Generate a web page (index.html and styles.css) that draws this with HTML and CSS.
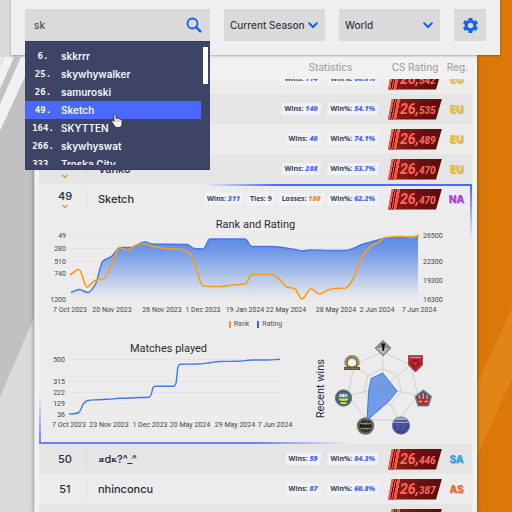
FILE: index.html
```html
<!DOCTYPE html>
<html lang="en">
<head>
<meta charset="utf-8">
<title>Leaderboard</title>
<link rel="stylesheet" href="styles.css">
</head>
<body>
<svg class="backdrop" viewBox="0 0 512 512" preserveAspectRatio="none" aria-hidden="true">
  <rect width="256" height="512" fill="#c1c1c1"/>
  <rect x="256" width="256" height="512" fill="#dc780a"/>
  <path d="M0 0H40V57H0Z" fill="#d9d9d9"/>
  <path d="M0 57H3L0 65Z" fill="#f0f0f0"/>
  <path d="M4 57H14L0 89V66Z M21 57H34L0 131V104Z" fill="#f1f1f1"/>
  <path d="M0 397L40 304V512H0Z" fill="#dadada"/>
  <path d="M512 308V378L470 472V400Z" fill="#e28518"/>
</svg>

<header class="toolbar">
  <div class="search">
    <label class="hidden" for="q">Search player</label>
    <input id="q" class="search-input" type="text" value="sk" autocomplete="off">
    <button class="search-button" type="button" aria-label="Search">
      <svg viewBox="0 0 16 16" width="16" height="16"><circle cx="6.5" cy="6.5" r="5" fill="none" stroke="#1763ea" stroke-width="1.8"/><path d="M10.2 10.2L14.3 14.3" stroke="#1763ea" stroke-width="2.5" stroke-linecap="round"/></svg>
    </button>
    <div class="results">
      <ul class="results-list">
        <li><span class="place">6.</span>skkrrr</li>
        <li><span class="place">25.</span>skywhywalker</li>
        <li><span class="place">26.</span>samuroski</li>
        <li class="active"><span class="place">49.</span>Sketch</li>
        <li><span class="place">164.</span>SKYTTEN</li>
        <li><span class="place">266.</span>skywhyswat</li>
        <li><span class="place">333.</span>Troska City</li>
      </ul>
      <span class="thumb"></span>
      <svg class="pointer" viewBox="0 0 12 16" width="12" height="16" aria-hidden="true"><path d="M3 8.5V1.8C3 .4 5 .4 5 1.8V5.4C5.6 4.8 6.8 5 7 5.9C7.7 5.3 8.8 5.600 9 6.500C9.900 6 11 6.500 11 7.600V10.500C11 13.500 9.500 14.500 7 14.500C4.500 14.500 3.700 13.500 2.700 11.800L.8 8.800C.3 7.700 1.500 7 2.200 7.700Z" fill="#fff" stroke="#222" stroke-width=".8"/><path d="M5 6V9M7 6.500V9M9 7V9" stroke="#555" stroke-width=".5"/></svg>
    </div>
  </div>
  <div class="picker">
    <label class="hidden" for="season">Season</label>
    <select id="season"><option>Current Season</option></select>
    <svg class="chevron" viewBox="0 0 10 7" width="10" height="7"><path d="M1.200 1.200L5 5L8.800 1.200"/></svg>
  </div>
  <div class="picker">
    <label class="hidden" for="region">Region</label>
    <select id="region"><option>World</option></select>
    <svg class="chevron" viewBox="0 0 10 7" width="10" height="7"><path d="M1.200 1.200L5 5L8.800 1.200"/></svg>
  </div>
  <button class="settings" type="button" aria-label="Settings">
    <svg viewBox="0 0 24 24" width="19" height="19"><path fill="#1763ea" d="M19.140 12.940c.040-.300.060-.610.060-.940 0-.320-.020-.640-.070-.940l2.030-1.580c.180-.140.230-.410.120-.610l-1.920-3.320c-.120-.220-.370-.290-.590-.220l-2.390.960c-.500-.380-1.030-.700-1.620-.940l-.360-2.540c-.040-.240-.240-.410-.480-.410h-3.840c-.240 0-.430.170-.470.410l-.360 2.540c-.590.240-1.130.570-1.620.940l-2.390-.960c-.220-.080-.470 0-.590.220L2.740 8.870c-.120.210-.080.470.120.610l2.030 1.580c-.050.300-.090.630-.090.940s.020.640.070.940l-2.030 1.580c-.180.140-.230.410-.120.610l1.920 3.320c.120.220.370.290.590.220l2.390-.960c.500.380 1.030.700 1.620.940l.360 2.540c.050.240.240.410.480.410h3.840c.240 0 .440-.170.470-.410l.360-2.540c.590-.240 1.130-.560 1.620-.940l2.390.960c.220.080.470 0 .590-.220l1.920-3.320c.120-.220.070-.470-.120-.610l-2.010-1.580zM12 15.600c-1.980 0-3.600-1.620-3.600-3.600s1.620-3.600 3.600-3.600 3.600 1.620 3.600 3.600-1.620 3.600-3.600 3.600z"/></svg>
  </button>
</header>

<main class="board">
<table>
  <thead>
    <tr><th class="rank"></th><th class="name"></th><th class="stats">Statistics</th><th class="rating">CS Rating</th><th class="zone">Reg.</th></tr>
  </thead>
  <tbody>
    <tr class="row cut">
      <td class="rank"></td><td class="name"></td>
      <td class="stats"><span class="pill">Wins: <b>114</b></span><span class="pill">Win%: <b>60.0%</b></span></td>
      <td class="rating"><span class="badge">26,<small>542</small></span></td><td class="zone eu">EU</td>
    </tr>
    <tr class="row odd">
      <td class="rank"></td><td class="name"></td>
      <td class="stats"><span class="pill">Wins: <b>140</b></span><span class="pill">Win%: <b>54.1%</b></span></td>
      <td class="rating"><span class="badge">26,<small>535</small></span></td><td class="zone eu">EU</td>
    </tr>
    <tr class="row">
      <td class="rank"></td><td class="name"></td>
      <td class="stats"><span class="pill">Wins: <b>40</b></span><span class="pill">Win%: <b>74.1%</b></span></td>
      <td class="rating"><span class="badge">26,<small>489</small></span></td><td class="zone eu">EU</td>
    </tr>
    <tr class="row odd">
      <td class="rank moved">48<svg viewBox="0 0 8 5" width="8" height="5"><path d="M1.500 1L4 3.500L6.500 1"/></svg></td><td class="name">Vanko</td>
      <td class="stats"><span class="pill">Wins: <b>288</b></span><span class="pill">Win%: <b>53.7%</b></span></td>
      <td class="rating"><span class="badge">26,<small>470</small></span></td><td class="zone eu">EU</td>
    </tr>
  </tbody>
  <tbody class="open">
    <tr class="row">
      <td class="rank moved">49<svg viewBox="0 0 8 5" width="8" height="5"><path d="M1.500 1L4 3.500L6.500 1"/></svg></td><td class="name">Sketch</td>
      <td class="stats tight"><span class="pill">Wins: <b>311</b></span><span class="pill">Ties: 9</span><span class="pill">Losses: <b class="loss">180</b></span><span class="pill">Win%: <b>62.2%</b></span></td>
      <td class="rating"><span class="badge">26,<small>470</small></span></td><td class="zone na">NA</td>
    </tr>
    <tr class="detail">
      <td colspan="5">
        <h3>Rank and Rating</h3>
        <svg class="chart" viewBox="39 234 433 82">
          <defs><linearGradient id="fade" x1="0" y1="0" x2="0" y2="1"><stop offset="0" stop-color="#5b8ae6"/><stop offset=".2" stop-color="#6c96e8"/><stop offset="1" stop-color="#6c96e8" stop-opacity="0"/></linearGradient></defs>
          <path class="grid" d="M70 235.500H419M70 248.500H419M70 261.500H419M70 273.500H419M70 299.500H419"/>
          <path class="area" data-floor="299" data-curve="71,292.500 79,289.500 88,292.500 95,285 103,261 112,256 120,247.500 130,247.500 145,242 152,244 187,244.500 194,248.500 203,249 210,239 245,239 252,246.500 272,246.500 295,249.500 302,251 310,250 330,250.500 345,250.500 353,248.500 362,244.500 378,240 386,238 418,237"/>
          <path class="line" data-curve="71,292.500 79,289.500 88,292.500 95,285 103,261 112,256 120,247.500 130,247.500 145,242 152,244 187,244.500 194,248.500 203,249 210,239 245,239 252,246.500 272,246.500 295,249.500 302,251 310,250 330,250.500 345,250.500 353,248.500 362,244.500 378,240 386,238 418,237"/>
          <path class="line rank-line" data-curve="70,275 79,269.500 87,287 95,280.500 104,278.500 112,264 119,247.500 128,250.500 136,245 145,243.500 153,246.500 165,248.500 182,249.500 189,253 195,264 203,286 220,286.500 233,285 245,284 252,274.500 272,274.500 279,279 286,286.500 295,289 302,299 311,288.500 319,294 328,290 335,288.500 346,288 353,279 362,257 370,247 378,242.500 385,237.500 403,236.500 412,237.500 419,235"/>
          <g class="axis end"><text x="66" y="238">49</text><text x="66" y="251">280</text><text x="66" y="264">510</text><text x="66" y="276">740</text><text x="66" y="302">1200</text></g>
          <g class="axis"><text x="423" y="238">26500</text><text x="423" y="264">22300</text><text x="423" y="283">19300</text><text x="423" y="302">16300</text></g>
          <g class="axis mid"><text x="70" y="312">7 Oct 2023</text><text x="112" y="312">20 Nov 2023</text><text x="162" y="312">26 Nov 2023</text><text x="203" y="312">1 Dec 2023</text><text x="245" y="312">19 Jan 2024</text><text x="286" y="312">22 May 2024</text><text x="336" y="312">28 May 2024</text><text x="377" y="312">2 Jun 2024</text><text x="419" y="312">7 Jun 2024</text></g>
        </svg>
        <ul class="legend"><li class="key-rank">Rank</li><li class="key-rating">Rating</li></ul>
        <div class="lower">
          <section>
            <h3>Matches played</h3>
            <svg class="chart" viewBox="39 358 259 72">
              <path class="grid" d="M70 359.500H280M70 381.500H280M70 392.500H280M70 403.500H280M70 414.500H280"/>
              <path class="line" data-curve="69,414 75,413.500 79,412.500 81,409 84,403 88,400.500 97,399.800 107,399.300 120,398.300 135,397.700 149,397.300 151,395 153,388 155,386.300 174,386.300 176,383 178,367 180,364.300 197,364 210,362.700 219,361.500 238,361.300 252,360 267,360 280,359.300"/>
              <g class="axis end"><text x="65" y="362">500</text><text x="65" y="384">315</text><text x="65" y="395">222</text><text x="65" y="406">129</text><text x="65" y="417">36</text></g>
              <g class="axis mid"><text x="69" y="427">7 Oct 2023</text><text x="109" y="427">23 Nov 2023</text><text x="150" y="427">1 Dec 2023</text><text x="190" y="427">20 May 2024</text><text x="235" y="427">29 May 2024</text><text x="275" y="427">7 Jun 2024</text></g>
            </svg>
          </section>
          <section class="recent">
            <h3 class="sideways">Recent wins</h3>
            <svg class="radar" viewBox="332 339 102 102" role="img" aria-label="Recent wins by map">
              <g class="web">
                <path d="M382.700 352.500L410.800 366L417.800 396.500L398.300 421H367.100L347.600 396.500L354.600 366Z"/>
                <path d="M382.700 369.500L397.600 376.600L401.200 392.700L391 405.600H374.500L364.200 392.700L367.800 376.600Z"/>
                <path d="M382.700 380.500L389 383.500L390.500 390.300L386.200 395.700H379.200L374.900 390.300L376.400 383.500Z"/>
                <path d="M382.700 388.500V352.500M382.700 388.500L410.800 366M382.700 388.500L417.800 396.500M382.700 388.500L398.300 421M382.700 388.500L367.100 421M382.700 388.500L347.600 396.500M382.700 388.500L354.600 366"/>
              </g>
              <g stroke="#5d5a50" stroke-width=".6">
                <path d="M383 341.500L391 349L383 357L375 349Z" fill="#8f8f8d"/><path d="M376.500 349H389.500L383 355.500Z" fill="#bcbcba" stroke="none"/><path d="M381 344.500H385.500L384.500 347L384 352H382.500L382 347Z" fill="#171717" stroke="none"/>
                <path d="M408.500 356.500H422.500V366L415.500 373L408.500 366Z" fill="#b3202a" stroke="#6d3a3c"/><path d="M410 358.500H421" stroke="#d7a2a4" stroke-width="1.500" stroke-dasharray="1.500 .4"/><circle cx="415.500" cy="364.500" r="3" fill="#9c1721" stroke="#6b141b"/><path d="M413 364L417 362.500L416 367Z" fill="#cf3b44" stroke="none"/>
                <path d="M423.300 391L431.500 397.500L428.500 407H418L415 397.500Z" fill="#b52835" stroke="#35aeb9" stroke-width="1.200"/><path d="M419.500 396V400M423.300 394V400M427 396V400" stroke="#74c5c9" stroke-width="1.500"/><path d="M418.500 402.500H422M424.500 402.500H428" stroke="#e1b24d" stroke-width="1.300"/>
                <circle cx="401" cy="426.500" r="8.700" fill="#414b93" stroke="#6a719d"/><path d="M393 424A8.400 8.400 0 0 1 409 424Z" fill="#a5aacd" stroke="none"/><path d="M394.500 422H407.500" stroke="#424c90" stroke-width="2" stroke-dasharray="1.400 .3"/><path d="M395 426H407M398 426V431M403 427V431" stroke="#6970aa" stroke-width=".7"/>
                <circle cx="343.500" cy="399" r="8" fill="#36596a" stroke="#737a74" stroke-width="1.300"/><circle cx="343.500" cy="399" r="6.200" fill="#39779a" stroke="none"/><path d="M338 399.500H349L346 402L346.500 405H340.500L341 402Z" fill="#eadc38" stroke="none"/><path d="M339.500 396.500H347.500" stroke="#dce6df" stroke-width="3" stroke-dasharray="2 .5"/><path d="M341 402.500H346" stroke="#285a76" stroke-width="1.200"/>
                <circle cx="352" cy="363.500" r="5.800" fill="#e9e6da" stroke="#7f7349" stroke-width="3.600"/><circle cx="352" cy="363.500" r="6.500" fill="none" stroke="#c2b88c" stroke-width="1.500" stroke-dasharray="1.500 1.200"/><path d="M344 368H360V371H344Z" fill="#5f5534" stroke="none"/><path d="M345.500 369.500H358.500" stroke="#b5aa7c" stroke-dasharray="1 .6"/><path d="M348 366V362.500L351 360L353 361.500L356 362V366Z" fill="#f6f4ee" stroke="none"/>
              </g>
              <g stroke="#24231f"><circle cx="365.500" cy="427" r="8" fill="#5a564b" stroke="#77715f" stroke-width="1.500"/><circle cx="365.500" cy="427" r="5" fill="none" stroke-width="2" stroke-dasharray="2.200 1"/><path d="M360 424.500H371M360 429.500H371" stroke="#9b9583" stroke-width=".8"/><path d="M360 426H371V428.500H360Z" fill="#22211e" stroke="none"/></g>
              <path d="M382.700 374L397 392L389 402L367 421.500L368.700 391.500L371.300 379.500Z" fill="#5d8de8" fill-opacity=".85" stroke="#3f77e0"/>
            </svg>
          </section>
        </div>
      </td>
    </tr>
  </tbody>
  <tbody>
    <tr class="row odd">
      <td class="rank">50</td><td class="name"><span class="tiny">ᴙ</span>d<span class="tiny">ᴋ</span>?^_^</td>
      <td class="stats"><span class="pill">Wins: <b>59</b></span><span class="pill">Win%: <b>84.3%</b></span></td>
      <td class="rating"><span class="badge">26,<small>446</small></span></td><td class="zone sa">SA</td>
    </tr>
    <tr class="row">
      <td class="rank">51</td><td class="name">nhinconcu</td>
      <td class="stats"><span class="pill">Wins: <b>87</b></span><span class="pill">Win%: <b>60.8%</b></span></td>
      <td class="rating"><span class="badge">26,<small>387</small></span></td><td class="zone as">AS</td>
    </tr>
    <tr class="row odd">
      <td class="rank"></td><td class="name"></td><td class="stats"></td>
      <td class="rating"><span class="badge"></span></td><td class="zone"></td>
    </tr>
  </tbody>
</table>
</main>
<script src="charts.js"></script>
</body>
</html>
```
FILE: styles.css
```css
* { box-sizing: border-box; }
html, body { height: 100%; }
body {
  margin: 0;
  overflow: hidden;
  display: flex;
  flex-direction: column;
  font-family: Inter, "Liberation Sans", sans-serif;
  color: #272d3a;
}
ul { margin: 0; padding: 0; list-style: none; }
button { border: 0; padding: 0; display: flex; align-items: center; justify-content: center; }
.hidden { position: absolute; width: 1px; height: 1px; overflow: hidden; clip-path: inset(50%); }
.backdrop { position: absolute; inset: 0; width: 100%; height: 100%; z-index: -1; }

/* Toolbar */
.toolbar {
  position: relative;
  z-index: 2;
  display: grid;
  grid-template-columns: minmax(0, 185fr) minmax(0, 101fr) minmax(0, 101fr) 32px;
  gap: 14px;
  margin: 0 12px 0 11px;
  padding: 9px 14px 14px;
  background: #efefef;
  box-shadow: 0 1px 2px rgba(0, 0, 0, .3);
}
.search, .picker { position: relative; display: flex; background: #dadada; height: 32px; }
.search-input {
  flex: 1;
  min-width: 0;
  border: 0;
  padding: 0 9px;
  background: none;
  color: #4a4d55;
  font: 500 10px Inter, sans-serif;
  outline: 0;
}
.search-button { width: 33px; background: none; }
.picker select {
  appearance: none;
  width: 100%;
  border: 0;
  padding: 0 6px;
  background: none;
  color: #343c4c;
  font: 500 10px Inter, sans-serif;
}
.chevron { position: absolute; right: 7px; top: 13px; }
.chevron path { fill: none; stroke: #1763ea; stroke-width: 2; stroke-linecap: round; }
.settings { width: 32px; height: 32px; background: #dadada; }

/* Search results */
.results {
  position: absolute;
  top: 100%;
  left: 0;
  right: 0;
  height: 129px;
  padding: 5px 9px 4px 0;
  background: #3d4466;
  border: 1px solid #343a62;
  border-width: 1px 0;
}
.results-list { height: 100%; overflow: hidden; color: #f4f4f8; font-size: 10px; font-weight: 600; }
.results-list li { display: flex; height: 18px; line-height: 18px; }
.results-list .active { background: #4b68ff; }
.place {
  width: 36px;
  text-align: center;
  font: bold 9px/18px "DejaVu Sans Mono", monospace;
}
.thumb { position: absolute; top: 5px; right: 2px; width: 5px; height: 37px; background: #fff; }
.pointer { position: absolute; left: 86px; top: 71px; }

/* Board */
.board {
  flex: 1;
  overflow: hidden;
  margin: 0 35px 0 34px;
  padding: 0 4px;
  background: #f1f1f1;
  border-right: 1px solid #fafafa;
  border-left: 1px solid #ddd;
  box-shadow: 0 0 4px rgba(0, 0, 0, .45);
}
table, thead, tbody { display: block; }
tr { display: grid; grid-template-columns: 48px 84px 1fr 63px 29px; }
td, th { padding: 0; }
thead tr { height: 24px; align-items: center; }
th { color: #a5a5a5; font-size: 10px; font-weight: 500; white-space: nowrap; }
th.stats { padding-left: 110px; }
th.rating { padding-left: 7px; }
.row { height: 30px; background: #ececec; }
.row.odd { background: #e5e5e5; }
.row.cut { height: 15px; overflow: hidden; align-content: end; }
.row td { height: 30px; display: flex; align-items: center; }
.row .rank { position: relative; justify-content: center; padding-left: 4px; font-size: 11px; font-weight: 500; }
.row .rank::after { content: ""; position: absolute; right: 0; top: 6px; width: 1px; height: 18px; background: #dadada; }
.row .moved { flex-direction: column; line-height: 14px; }
.moved svg { margin-top: 1px; }
.moved path { fill: none; stroke: #e58a24; stroke-width: 1.2; }
.row .name { padding-left: 11px; font-size: 11px; font-weight: 500; white-space: nowrap; }
.tiny { font: bold 8px "DejaVu Serif", serif; }
.row .stats { justify-content: flex-end; gap: 5px; padding-right: 1px; }
.row .tight { gap: 2px; }
.pill {
  padding: 0 4px;
  background: #eff3f8;
  clip-path: polygon(2px 0, 100% 0, calc(100% - 2px) 100%, 0 100%);
  color: #3a4152;
  font: 700 7px/12px "Open Sans", sans-serif;
  white-space: nowrap;
}
.pill b { color: #4964f2; font-style: italic; }
.pill .loss { color: #e58a24; }
.row .rating { justify-content: flex-end; padding-right: 1px; }
.badge {
  width: 54px;
  height: 21px;
  padding-left: 12px;
  background:
    linear-gradient(101deg, #f0584c 0 6px, #57100f 6px 7px, #f0584c 7px 8px, #701411 8px 9px, #f55648 9px 12px, transparent 12px),
    linear-gradient(90deg, #9a1d17, #671010 65%, #5b0d0d);
  clip-path: polygon(4px 0, 100% 0, calc(100% - 6px) 100%, 0 100%);
  color: #ff6b5d;
  font: italic bold 14px/21px Roboto, sans-serif;
}
.badge small { font-size: 10px; }
.row .zone { justify-content: center; padding-right: 2px; font-size: 10px; font-weight: 800; text-shadow: 1px 1px 0 rgba(60, 60, 90, .3); }
.eu { color: #f2bf11; }
.na { color: #ac38dd; }
.sa { color: #26a4e6; }
.as { color: #e06c25; }

/* Expanded player */
.open {
  background:
    linear-gradient(90deg, transparent 38%, #4b68ff 55%) top / 100% 2px no-repeat,
    linear-gradient(#4b68ff, transparent) top right / 2px 56px no-repeat,
    linear-gradient(transparent, #6c80f6) bottom left / 2px 48px no-repeat,
    linear-gradient(90deg, #6c80f6 50%, transparent 72%) bottom / 100% 2px no-repeat,
    #ececec;
}
.open .row { background: none; }
.detail { display: block; height: 230px; }
.detail > td { display: block; }
h3 { margin: 0 0 -2px; font: 400 11px/22px Roboto, sans-serif; text-align: center; }
.chart { display: block; width: 100%; overflow: visible; }
.grid { fill: none; stroke: #e4e4e4; }
.line { fill: none; stroke: #4178e4; stroke-width: 1.4; stroke-linejoin: round; }
.rank-line { stroke: #fb9e16; stroke-width: 1.7; }
.area { fill: url(#fade); }
.axis { font: 7px Roboto, sans-serif; fill: #444; }
.end { text-anchor: end; }
.mid { text-anchor: middle; }
.legend { display: flex; justify-content: center; gap: 8px; font: 7px/16px Roboto, sans-serif; color: #555; }
.legend li { display: flex; align-items: center; gap: 3px; }
.legend li::before { content: ""; width: 2px; height: 7px; background: #f89a12; }
.legend .key-rating::before { background: #2d68e0; }
.lower { display: grid; grid-template-columns: 259fr 174fr; padding-top: 6px; }
.recent { display: flex; align-items: center; }
.sideways { writing-mode: vertical-rl; transform: rotate(180deg); margin: 0 0 0 12px; }
.radar { width: 102px; height: 102px; overflow: visible; }
.web { fill: none; stroke: #d0d0d0; }
```
FILE: charts.js
```js
// Draws a monotone cubic curve through the points listed in data-curve.
document.querySelectorAll("[data-curve]").forEach(function (path) {
  var p = path.dataset.curve.split(" ").map(function (s) { return s.split(",").map(Number); });
  var n = p.length, slope = [], tan = [];
  for (var i = 0; i < n - 1; i++) slope.push((p[i + 1][1] - p[i][1]) / (p[i + 1][0] - p[i][0]));
  for (i = 0; i < n; i++) {
    if (i === 0) tan.push(slope[0]);
    else if (i === n - 1) tan.push(slope[n - 2]);
    else if (slope[i - 1] * slope[i] <= 0) tan.push(0);
    else tan.push(2 * slope[i - 1] * slope[i] / (slope[i - 1] + slope[i]));
  }
  var d = "M" + p[0];
  for (i = 0; i < n - 1; i++) {
    var h = (p[i + 1][0] - p[i][0]) / 3;
    d += "C" + [p[i][0] + h, p[i][1] + tan[i] * h, p[i + 1][0] - h, p[i + 1][1] - tan[i + 1] * h, p[i + 1][0], p[i + 1][1]];
  }
  var floor = path.dataset.floor;
  if (floor) d += "V" + floor + "H" + p[0][0] + "Z";
  path.setAttribute("d", d);
});
```
